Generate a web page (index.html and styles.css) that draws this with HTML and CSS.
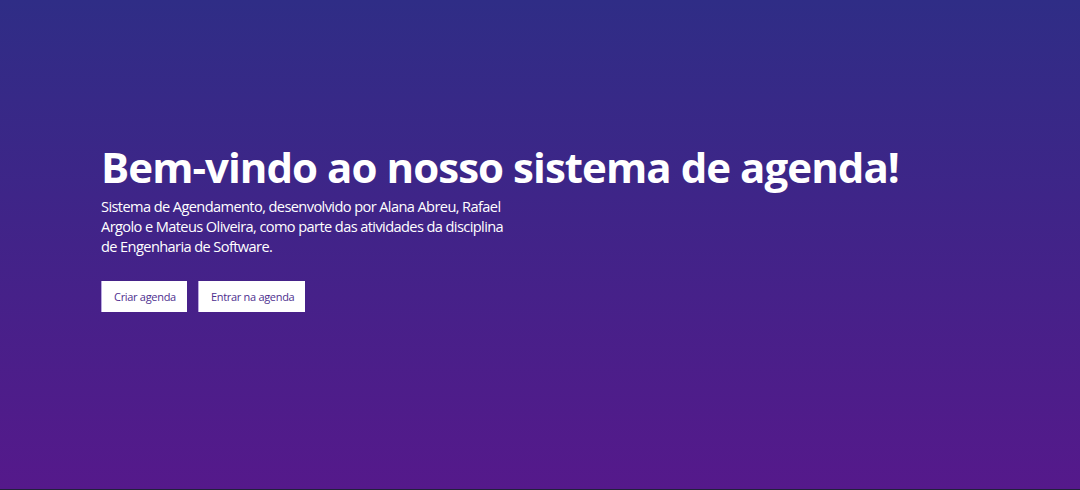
FILE: index.html
```html
<!DOCTYPE html>
<html lang="pt-BR">
<head>
<meta charset="utf-8">
<title>Sistema de Agendamento</title>
<link rel="stylesheet" href="styles.css">
</head>
<body>
<section class="hero">
  <div class="hero-content">
    <h1 class="hero-title">Bem-vindo ao nosso sistema de agenda!</h1>
    <p class="hero-text">Sistema de Agendamento, desenvolvido por Alana Abreu, Rafael Argolo e Mateus Oliveira, como parte das atividades da disciplina de Engenharia de Software.</p>
    <div class="hero-actions">
      <a class="btn" href="#">Criar agenda</a>
      <a class="btn" href="#">Entrar na agenda</a>
    </div>
  </div>
</section>
</body>
</html>
```
FILE: styles.css
```css
html, body {
  margin: 0;
  padding: 0;
}
body {
  background: #22213b;
  font-family: "Open Sans", "Noto Sans", sans-serif;
  height: 490px;
  overflow: hidden;
}
.hero {
  height: 489px;
  background: linear-gradient(180deg, #2f2d86 0%, #55198b 100%);
  box-sizing: border-box;
  padding: 142px 0 0 101px;
}
.hero-title {
  margin: 0;
  color: #ffffff;
  font-size: 42px;
  font-weight: 700;
  line-height: 50px;
  letter-spacing: -0.95px;
  white-space: nowrap;
}
.hero-text {
  margin: 4px 0 0 0;
  max-width: 412px;
  color: #ffffff;
  font-size: 14.6px;
  line-height: 20px;
  letter-spacing: -0.6px;
}
.hero-actions {
  display: flex;
  gap: 11px;
  margin-top: 25px;
}
.btn {
  display: flex;
  align-items: center;
  height: 31px;
  box-sizing: border-box;
  padding: 0 11px 0 12px;
  background: #ffffff;
  border-left: 1px solid #b9a8e0;
  color: #4e2f8f;
  font-size: 11px;
  letter-spacing: -0.3px;
  text-decoration: none;
}
```
